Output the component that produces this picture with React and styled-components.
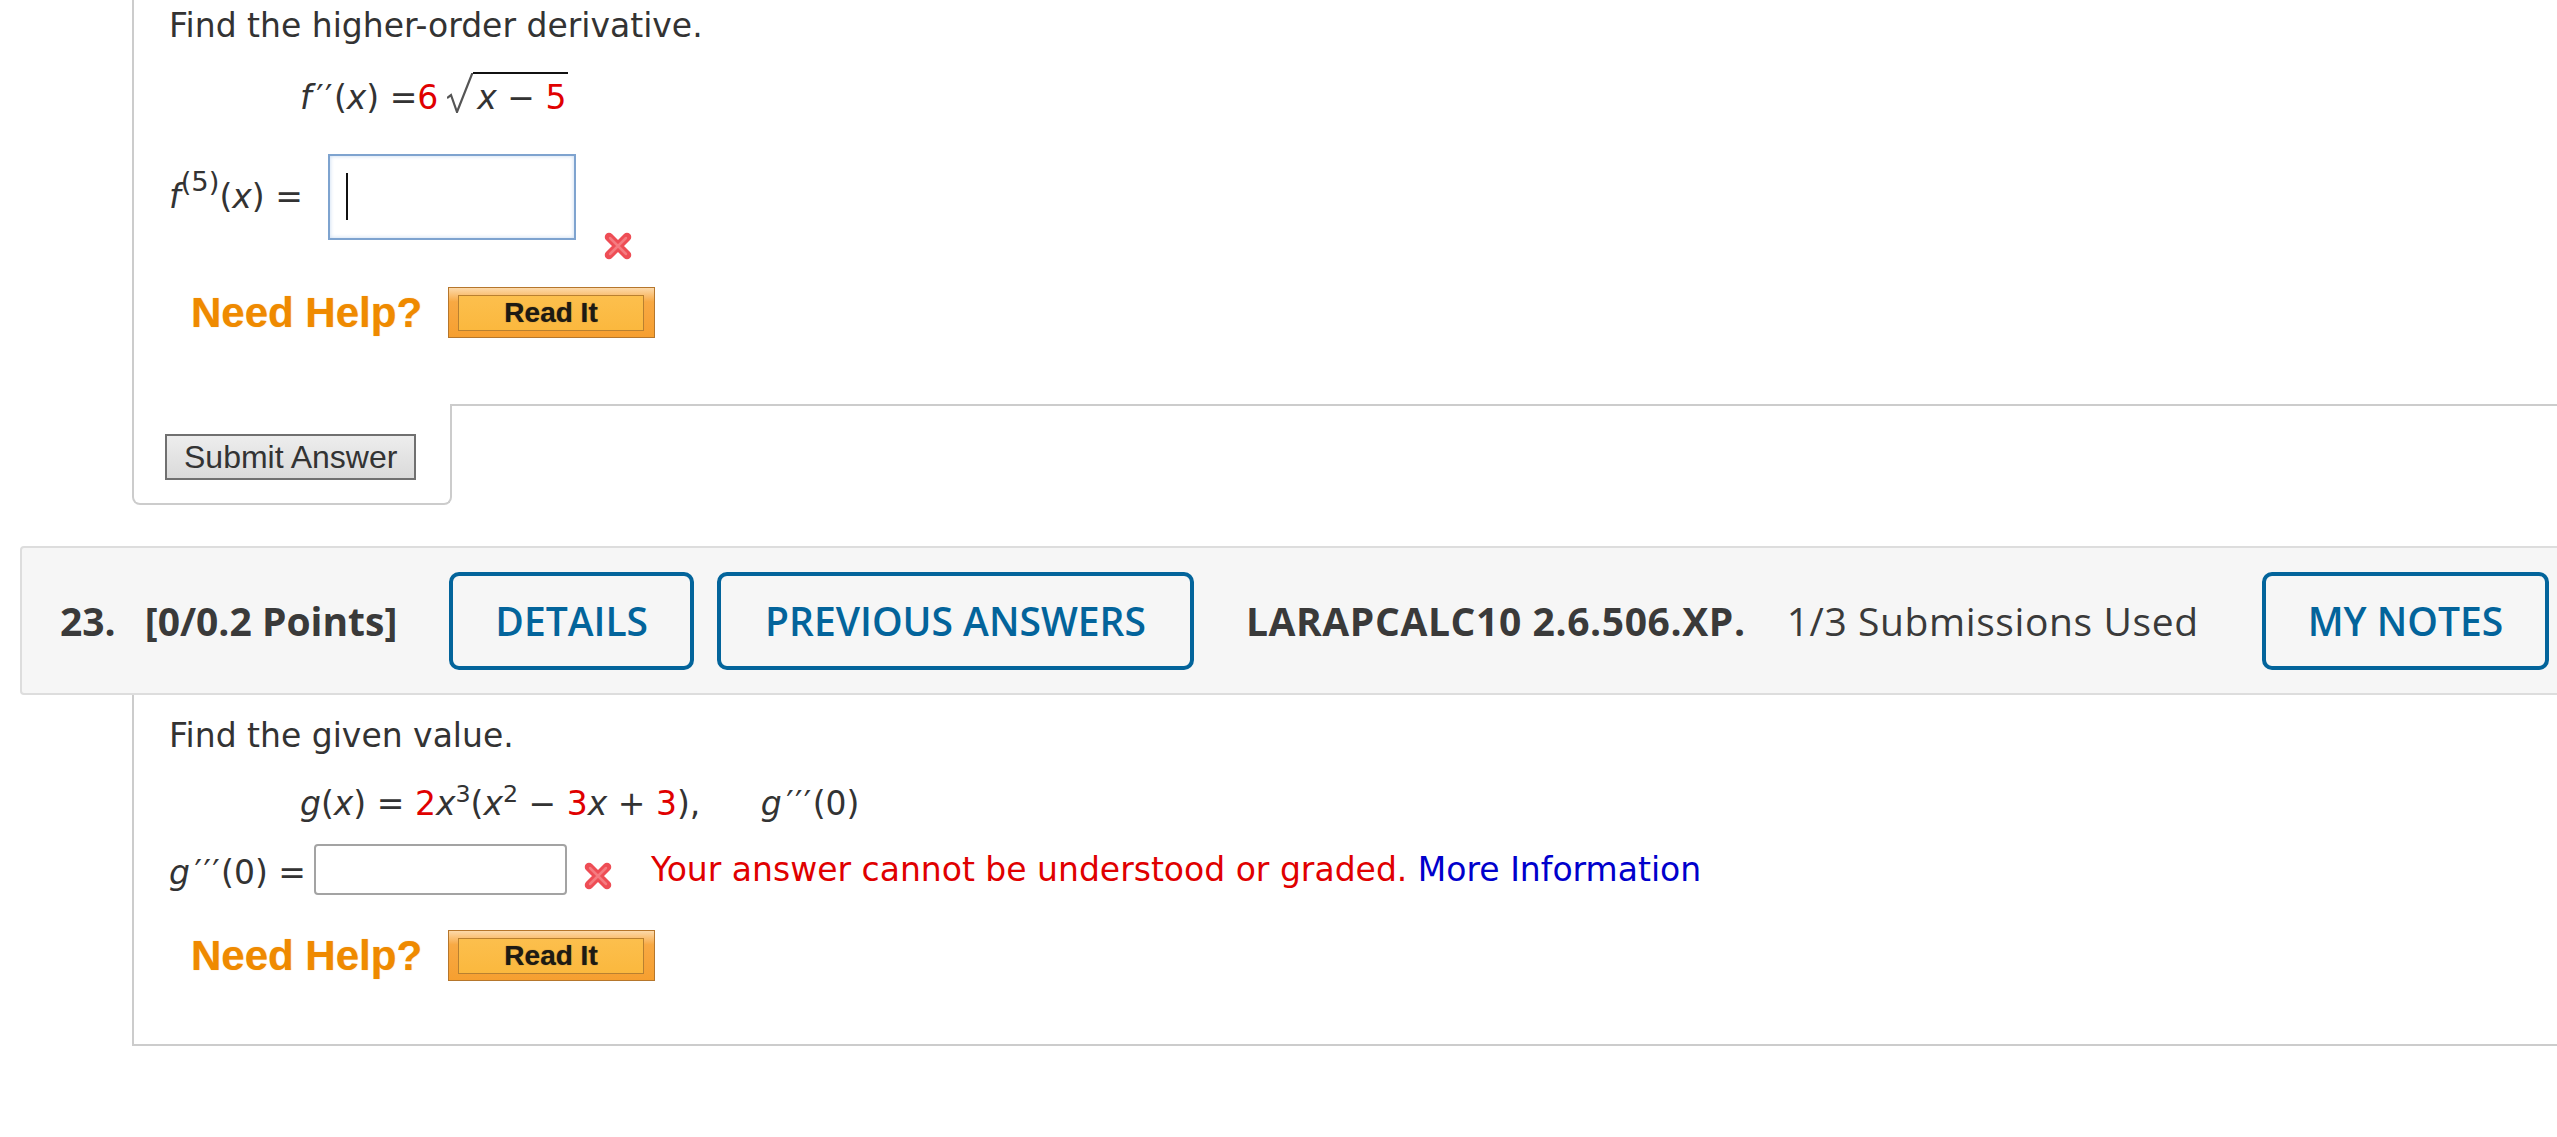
import React from 'react'
import styled, { createGlobalStyle } from 'styled-components'

const GlobalStyle = createGlobalStyle`
	html, body {
		margin: 0;
		padding: 0;
		background: #fff;
		overflow: hidden;
	}
	body {
		font-family: 'DejaVu Sans', Verdana, sans-serif;
		font-size: 33px;
		color: #333;
	}
`

const colors = {
	red: '#e00000',
	link: '#0000cc',
	help: '#ef8a00',
	border: '#cccccc',
	nav: '#03649b',
	heading: '#3a3a3a',
}

const Page = styled.div`
	padding-left: 20px;
	margin-right: -40px;
`

const TopCard = styled.div`
	margin-left: 112px;
	border-left: 2px solid ${colors.border};
	padding: 0 0 66px 35px;
`

const Prompt = styled.div`
	line-height: 52px;
	height: 52px;
	margin-top: ${p => p.$top || 0}px;
`

const Formula = styled.div`
	line-height: 52px;
	height: 52px;
	margin-left: 131px;
	margin-top: ${p => p.$top}px;
	white-space: nowrap;
`

const Var = styled.i`
	font-style: italic;
`

const Prime = styled.span`
	margin-left: 0.14em;
	letter-spacing: 0.04em;
`

const Red = styled.span`
	color: ${colors.red};
`

const Sup = styled.sup`
	font-size: ${p => p.$size || 0.72}em;
	vertical-align: ${p => p.$raise || 0.55}em;
	line-height: 0;
`

const Radical = styled.span`
	white-space: nowrap;
`

const RadicalSign = styled.svg`
	vertical-align: -4px;
	margin-left: 9px;
`

const Radicand = styled.span`
	border-top: 2px solid #111;
	padding: 4px 2px 0 4px;
`

const AnswerRow = styled.div`
	display: flex;
	align-items: flex-start;
	margin-top: ${p => p.$top}px;
	white-space: nowrap;
`

const Label = styled.span`
	line-height: ${p => p.$height}px;
	padding-top: ${p => p.$shift || 0}px;
`

const MathBox = styled.div`
	box-sizing: border-box;
	width: 248px;
	height: 86px;
	margin-left: 25px;
	border: 2px solid #7ea3cf;
	box-shadow: inset 0 0 4px #c4d8f0;
	background: #fff;
	display: flex;
	align-items: flex-start;
`

const Caret = styled.span`
	width: 2px;
	height: 47px;
	margin: 17px 0 0 16px;
	background: #111;
`

const TextBox = styled.input`
	box-sizing: border-box;
	width: 253px;
	height: 51px;
	margin-left: 8px;
	border: 2px solid #a3a3a3;
	border-radius: 4px;
	background: #fff;
	font: inherit;
	outline: none;
`

const Mark = styled.span`
	display: flex;
	margin-left: ${p => p.$left}px;
	margin-top: ${p => p.$top}px;
`

const Message = styled.span`
	line-height: 51px;
	margin-left: 36px;
	color: ${colors.red};
`

const Link = styled.a`
	color: ${colors.link};
	text-decoration: none;
`

const HelpRow = styled.div`
	display: flex;
	align-items: center;
	gap: 26px;
	height: 51px;
	margin: ${p => p.$top}px 0 0 22px;
`

const NeedHelp = styled.span`
	font: bold 42px 'Liberation Sans', Arial, sans-serif;
	color: ${colors.help};
	text-shadow: 0 0 1px rgba(239, 138, 0, 0.6);
`

const ReadIt = styled.button`
	box-sizing: border-box;
	width: 207px;
	height: 51px;
	padding: 7px 10px 6px 9px;
	border: 1px solid #b5762c;
	background: linear-gradient(#fcd9aa 0, #f8a943 28%, #f69f30 100%);
	cursor: pointer;
`

const ReadItFace = styled.span`
	box-sizing: border-box;
	display: flex;
	align-items: center;
	justify-content: center;
	height: 100%;
	border: 1px solid #b98030;
	background: linear-gradient(#fcbf4d, #fbb83e);
	font: bold 28px 'Liberation Sans', Arial, sans-serif;
	color: #1d1a14;
	text-shadow: 0 0 1px rgba(0, 0, 0, 0.55);
`

const BottomRow = styled.div`
	display: flex;
	margin-left: 112px;
`

const SubmitTab = styled.div`
	box-sizing: border-box;
	width: 320px;
	padding: 30px 0 23px 31px;
	border: 2px solid ${colors.border};
	border-top: none;
	border-radius: 0 0 8px 8px;
`

const TabFill = styled.div`
	flex: 1;
	border-top: 2px solid ${colors.border};
`

const SubmitButton = styled.button`
	box-sizing: border-box;
	height: 46px;
	padding: 0 17px;
	border: 2px solid #707070;
	background: linear-gradient(#ededed, #dadada);
	font: 32px 'Liberation Sans', Arial, sans-serif;
	color: #333;
`

const HeaderBar = styled.div`
	box-sizing: border-box;
	display: flex;
	align-items: center;
	height: 149px;
	margin-top: 41px;
	padding-left: 38px;
	border: 2px solid #dddddd;
	border-radius: 4px;
	background: #f6f6f6;
	font-family: 'Open Sans', sans-serif;
	font-size: 39px;
	color: ${colors.heading};
	white-space: nowrap;
`

const Strong = styled.span`
	font-weight: 700;
	margin-left: ${p => p.$left || 0}px;
	letter-spacing: ${p => p.$spread || 0}px;
`

const Plain = styled.span`
	font-weight: 400;
	margin-left: ${p => p.$left}px;
	letter-spacing: 0.6px;
`

const NavButton = styled.button`
	box-sizing: border-box;
	height: 98px;
	margin-left: ${p => p.$left}px;
	padding: 0 ${p => p.$pad || 42}px;
	border: 4px solid ${colors.nav};
	border-radius: 10px;
	background: transparent;
	font: 600 39px 'Open Sans', sans-serif;
	color: ${colors.nav};
`

const BottomCard = styled.div`
	margin-left: 112px;
	border-left: 2px solid ${colors.border};
	border-bottom: 2px solid ${colors.border};
	padding: 15px 0 63px 35px;
`

const WrongMark = () => (
	<svg width="34" height="34" viewBox="0 0 34 34">
		<path d="M8 8 L26 26 M26 8 L8 26" stroke="#ee4d55" strokeWidth="8.5" strokeLinecap="round" />
		<path d="M9 9 L25 25 M25 9 L9 25" stroke="#f57b80" strokeWidth="2.5" strokeLinecap="round" />
	</svg>
)

const Help = ({ top }) => (
	<HelpRow $top={top}>
		<NeedHelp>Need Help?</NeedHelp>
		<ReadIt>
			<ReadItFace>Read It</ReadItFace>
		</ReadIt>
	</HelpRow>
)

const App = () => (
	<Page>
		<GlobalStyle />
		<TopCard>
			<Prompt>Find the higher-order derivative.</Prompt>
			<Formula $top={20}>
				<Var>f</Var>
				<Prime>′′</Prime>(<Var>x</Var>) =<Red>6</Red>
				<Radical>
					<RadicalSign width="26" height="40" viewBox="0 0 26 40">
						<path d="M0 25 L4 22 L10 39 L25 1 L26 1" fill="none" stroke="#555" strokeWidth="2.2" />
					</RadicalSign>
					<Radicand>
						<Var>x</Var> − <Red>5</Red>
					</Radicand>
				</Radical>
			</Formula>
			<AnswerRow $top={30}>
				<Label $height={86}>
					<Var>f</Var>
					<Sup $size={0.83} $raise={0.62}>(5)</Sup>(<Var>x</Var>) =
				</Label>
				<MathBox>
					<Caret />
				</MathBox>
				<Mark $left={25} $top={75}>
					<WrongMark />
				</Mark>
			</AnswerRow>
			<Help top={24} />
		</TopCard>
		<BottomRow>
			<SubmitTab>
				<SubmitButton>Submit Answer</SubmitButton>
			</SubmitTab>
			<TabFill />
		</BottomRow>
		<HeaderBar>
			<Strong>23.</Strong>
			<Strong $left={29}>[0/0.2 Points]</Strong>
			<NavButton $left={52}>DETAILS</NavButton>
			<NavButton $left={23} $pad={44}>PREVIOUS ANSWERS</NavButton>
			<Strong $left={52} $spread={0.6}>LARAPCALC10 2.6.506.XP.</Strong>
			<Plain $left={41}>1/3 Submissions Used</Plain>
			<NavButton $left={63}>MY NOTES</NavButton>
		</HeaderBar>
		<BottomCard>
			<Prompt>Find the given value.</Prompt>
			<Formula $top={16}>
				<Var>g</Var>(<Var>x</Var>) = <Red>2</Red>
				<Var>x</Var>
				<Sup>3</Sup>(<Var>x</Var>
				<Sup>2</Sup> − <Red>3</Red>
				<Var>x</Var> + <Red>3</Red>),{'\u2003\u2002\u2004'}
				<Var>g</Var>
				<Prime>′′′</Prime>(0)
			</Formula>
			<AnswerRow $top={14}>
				<Label $height={51} $shift={3}>
					<Var>g</Var>
					<Prime>′′′</Prime>(0) =
				</Label>
				<TextBox />
				<Mark $left={14} $top={15}>
					<WrongMark />
				</Mark>
				<Message>
					Your answer cannot be understood or graded. <Link href="#">More Information</Link>
				</Message>
			</AnswerRow>
			<Help top={32} />
		</BottomCard>
	</Page>
)

export default App
